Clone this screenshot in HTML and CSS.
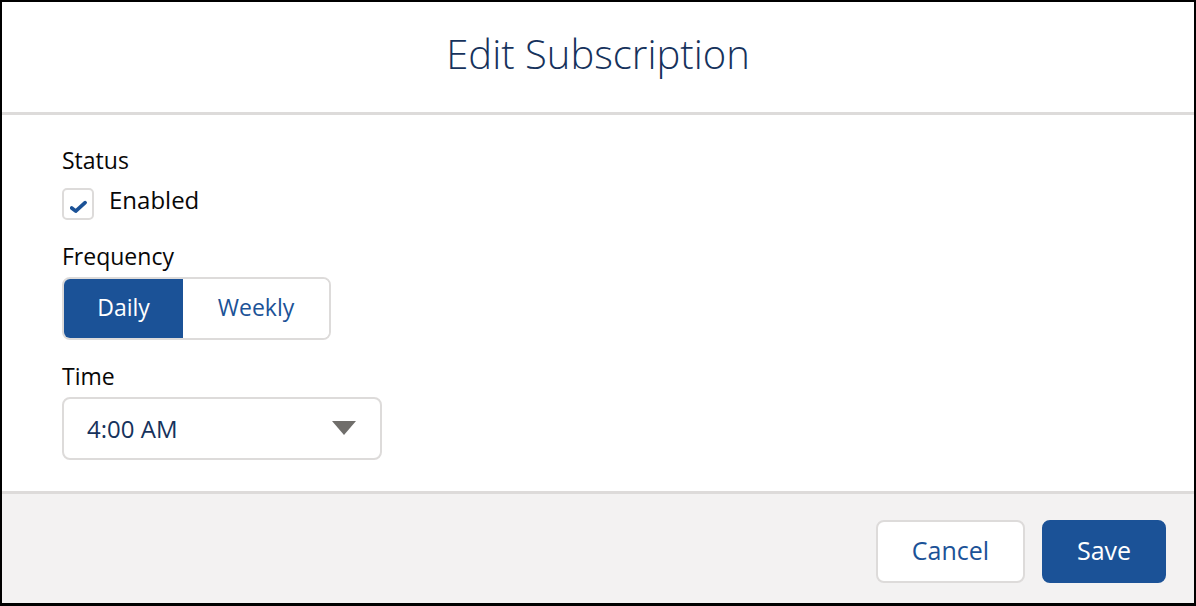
FILE: index.html
```html
<!DOCTYPE html>
<html lang="en">
<head>
<meta charset="utf-8">
<title>Edit Subscription</title>
<link rel="stylesheet" href="styles.css">
</head>
<body>
<div class="modal">
  <header class="modal-header">
    <h1 class="title">Edit Subscription</h1>
  </header>
  <main class="modal-body">
    <div class="label">Status</div>
    <label class="check-row">
      <span class="checkbox">
        <svg viewBox="0 0 16 16" width="16" height="16" aria-hidden="true"><path d="M1.6 9.4 L5.4 12.4 L14.2 4.4" fill="none" stroke="#1b5297" stroke-width="3.4" stroke-linecap="round" stroke-linejoin="round"/></svg>
      </span>
      <span class="check-text">Enabled</span>
    </label>
    <div class="label label-gap">Frequency</div>
    <div class="btn-group">
      <button class="seg seg-active">Daily</button>
      <button class="seg">Weekly</button>
    </div>
    <div class="label label-gap">Time</div>
    <div class="select">
      <span class="select-value">4:00 AM</span>
      <svg class="caret" viewBox="0 0 24 14" width="24" height="14" aria-hidden="true"><path d="M0 0 H24 L12 14 Z" fill="#706e6b"/></svg>
    </div>
  </main>
  <footer class="modal-footer">
    <button class="btn btn-neutral">Cancel</button>
    <button class="btn btn-brand">Save</button>
  </footer>
</div>
</body>
</html>
```

FILE: styles.css
```css
* { box-sizing: border-box; }
html, body { margin: 0; padding: 0; background: #ffffff; }
body {
  font-family: "Open Sans", "Liberation Sans", sans-serif;
  color: #080707;
}
.modal {
  width: 1196px;
  height: 606px;
  border: 2px solid #000;
  border-bottom-width: 3px;
  display: flex;
  flex-direction: column;
  background: #fff;
}
.modal-header {
  height: 113px;
  border-bottom: 3px solid #dddbda;
  display: flex;
  align-items: center;
  justify-content: center;
}
.title {
  margin: 0;
  font-weight: 300;
  font-size: 40px;
  color: #16325c;
  line-height: 1;
  padding-bottom: 6px;
}
.modal-body {
  flex: 1;
  padding: 30px 60px 0;
  display: flex;
  flex-direction: column;
  align-items: flex-start;
}
.label {
  font-size: 23px;
  line-height: 30px;
  color: #080707;
}
.label-gap { margin-top: 21px; }
.check-row {
  margin-top: 13px;
  display: flex;
  align-items: flex-start;
  gap: 15px;
}
.checkbox {
  width: 32px;
  height: 32px;
  border: 2px solid #dddbda;
  border-radius: 5px;
  display: flex;
  align-items: center;
  justify-content: center;
  padding-top: 4px;
}
.checkbox svg { width: 17px; height: 17px; }
.check-text {
  font-size: 24px;
  line-height: 24px;
}
.btn-group {
  margin-top: 6px;
  display: flex;
  border: 2px solid #dddbda;
  border-radius: 8px;
  overflow: hidden;
  height: 63px;
}
.seg {
  font-family: inherit;
  font-size: 23px;
  border: 0;
  background: #fff;
  color: #1b5297;
  padding: 0 0 3px;
  margin: 0;
}
.seg:first-child { width: 119px; }
.seg:last-child { width: 146px; }
.seg-active { background: #1b5297; color: #fff; }
.select {
  margin-top: 6px;
  width: 320px;
  height: 63px;
  border: 2px solid #dddbda;
  border-radius: 8px;
  display: flex;
  align-items: center;
  justify-content: space-between;
  padding: 0 24px 1px 23px;
}
.select-value {
  font-size: 24px;
  color: #16325c;
}
.modal-footer {
  height: 112px;
  border-top: 3px solid #dddbda;
  background: #f3f2f2;
  display: flex;
  justify-content: flex-end;
  align-items: flex-start;
  gap: 17px;
  padding: 26px 28px 0 0;
}
.btn {
  font-family: inherit;
  font-size: 25px;
  height: 63px;
  border-radius: 8px;
  padding: 0 0 3px;
  margin: 0;
}
.btn-neutral {
  width: 149px;
  background: #fff;
  border: 2px solid #dddbda;
  color: #1b5297;
}
.btn-brand {
  width: 124px;
  background: #1b5297;
  border: 2px solid #1b5297;
  color: #fff;
}
```
